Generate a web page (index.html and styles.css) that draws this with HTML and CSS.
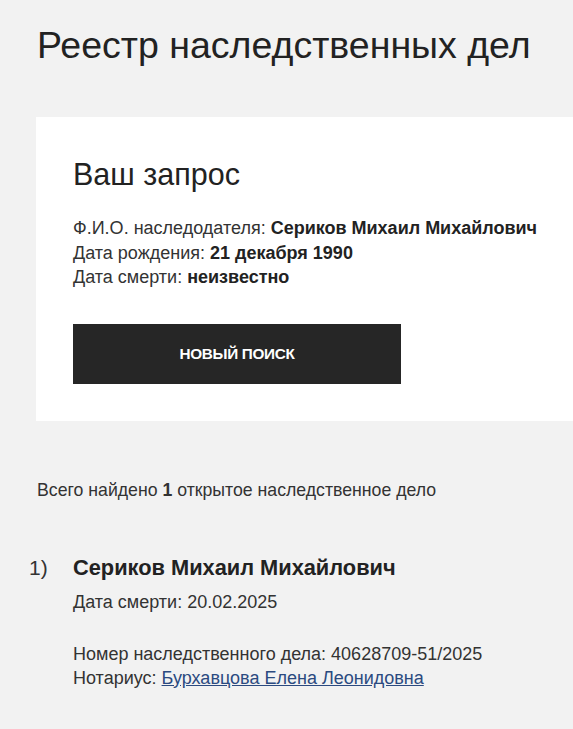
FILE: index.html
```html
<!DOCTYPE html>
<html lang="ru">
<head>
<meta charset="utf-8">
<title>Реестр наследственных дел</title>
<link rel="stylesheet" href="styles.css">
</head>
<body>
<main class="page">
  <h1 class="title">Реестр наследственных дел</h1>
  <section class="card">
    <h2 class="card-title">Ваш запрос</h2>
    <div class="query">
      <div>Ф.И.О. наследодателя: <b>Сериков Михаил Михайлович</b></div>
      <div>Дата рождения: <b>21 декабря 1990</b></div>
      <div>Дата смерти: <b>неизвестно</b></div>
    </div>
    <button class="btn" type="button">НОВЫЙ ПОИСК</button>
  </section>
  <p class="total">Всего найдено <b>1</b> открытое наследственное дело</p>
  <ol class="results">
    <li class="result">
      <span class="num">1)</span>
      <div class="info">
        <div class="name">Сериков Михаил Михайлович</div>
        <div class="death">Дата смерти: 20.02.2025</div>
        <div class="case">
          <div>Номер наследственного дела: 40628709-51/2025</div>
          <div>Нотариус: <a href="#" class="link">Бурхавцова Елена Леонидовна</a></div>
        </div>
      </div>
    </li>
  </ol>
</main>
</body>
</html>
```
FILE: styles.css
```css
html, body {
  margin: 0;
  padding: 0;
  background: #f2f2f2;
}
body {
  font-family: "Liberation Sans", Arial, sans-serif;
  color: #222;
}
.page {
  padding: 24px 0 40px 36px;
}
.title {
  margin: 0 0 0 1px;
  font-size: 37.5px;
  font-weight: 400;
  line-height: 42px;
  color: #222;
  white-space: nowrap;
}
.card {
  margin-top: 51px;
  background: #fff;
  padding: 40px 20px 37px 37px;
}
.card-title {
  margin: 0;
  font-size: 30.5px;
  font-weight: 400;
  line-height: 34px;
}
.query {
  margin-top: 25px;
  font-size: 18px;
  line-height: 24.5px;
  color: #333;
  white-space: nowrap;
}
.query b {
  color: #222;
}
.btn {
  margin-top: 34px;
  display: block;
  width: 328px;
  height: 60px;
  border: 0;
  background: #262626;
  color: #fff;
  font-family: "Liberation Sans", Arial, sans-serif;
  font-weight: 700;
  font-size: 15.3px;
  letter-spacing: -0.3px;
}
.total {
  margin: 58px 0 0 1px;
  font-size: 17.7px;
  line-height: 22px;
  color: #333;
}
.results {
  list-style: none;
  margin: 52px 0 0 -7px;
  padding: 0;
}
.result {
  display: flex;
}
.num {
  width: 44px;
  font-size: 21px;
  line-height: 30px;
  color: #333;
}
.name {
  font-size: 21.8px;
  font-weight: 700;
  line-height: 30px;
  color: #222;
}
.death {
  margin-top: 7px;
  font-size: 18px;
  line-height: 24px;
  color: #333;
}
.case {
  margin-top: 28px;
  font-size: 18px;
  line-height: 24px;
  color: #333;
}
.link {
  color: #2b4a80;
}
```
